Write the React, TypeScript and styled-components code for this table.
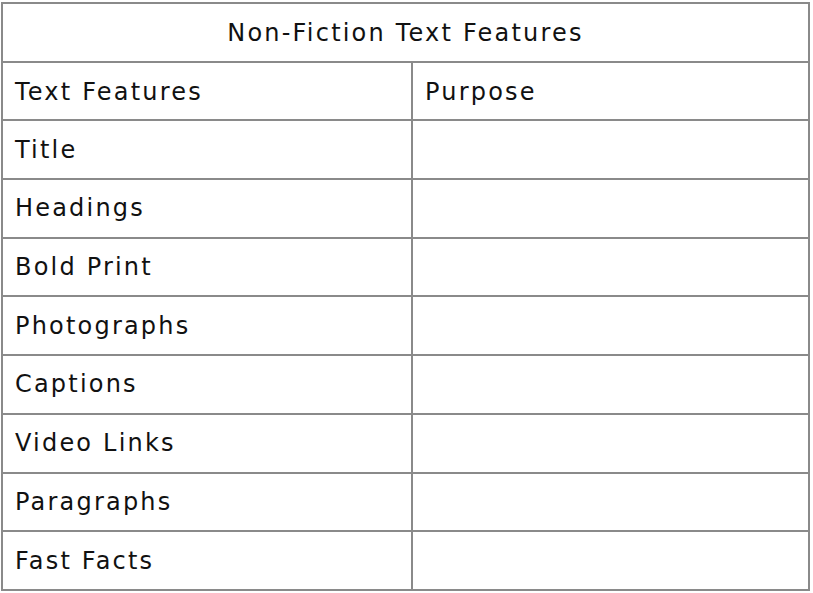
import React from "react";
import styled, { createGlobalStyle } from "styled-components";

const GlobalStyle = createGlobalStyle`
  html, body {
    margin: 0;
    padding: 0;
    background: #ffffff;
  }
  body {
    font-family: "DejaVu Sans", "Noto Sans", "Liberation Sans", sans-serif;
    color: #111111;
  }
`;

const Page = styled.div`
  padding: 2px 0 0 1px;
`;

const Table = styled.table`
  border-collapse: collapse;
  width: 809px;
  table-layout: fixed;
  font-size: 24px;
  letter-spacing: 2.2px;
`;

const Row = styled.tr`
  height: 58.7px;
`;

const TitleCell = styled.th`
  border: 2px solid #8a8a8a;
  text-align: center;
  font-weight: 400;
  padding: 2px 0 0;
`;

const HeadCell = styled.th`
  border: 2px solid #8a8a8a;
  text-align: left;
  font-weight: 400;
  padding: 2px 12px 0;
`;

const Cell = styled.td`
  border: 2px solid #8a8a8a;
  padding: 0 12px;
  text-align: left;
  vertical-align: middle;
`;

const features = [
  "Title",
  "Headings",
  "Bold Print",
  "Photographs",
  "Captions",
  "Video Links",
  "Paragraphs",
  "Fast Facts",
];

export default function App() {
  return (
    <>
      <GlobalStyle />
      <Page>
        <Table>
          <colgroup>
            <col style={{ width: 410 }} />
            <col />
          </colgroup>
          <thead>
            <Row>
              <TitleCell colSpan={2}>Non-Fiction Text Features</TitleCell>
            </Row>
            <Row>
              <HeadCell>Text Features</HeadCell>
              <HeadCell>Purpose</HeadCell>
            </Row>
          </thead>
          <tbody>
            {features.map((f) => (
              <Row key={f}>
                <Cell>{f}</Cell>
                <Cell />
              </Row>
            ))}
          </tbody>
        </Table>
      </Page>
    </>
  );
}
